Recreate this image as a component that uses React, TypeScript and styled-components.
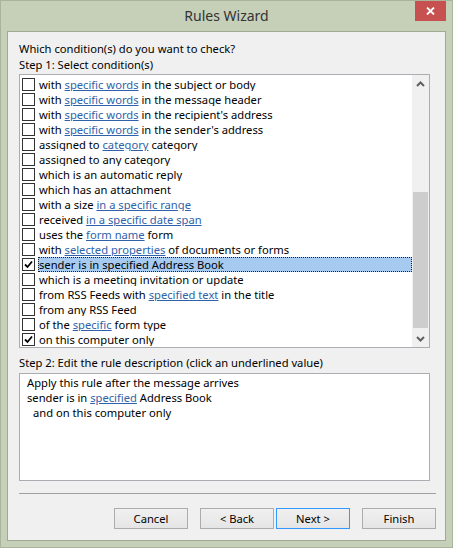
import styled, { createGlobalStyle, css } from "styled-components";

const GlobalStyle = createGlobalStyle`
  html, body {
    margin: 0;
    padding: 0;
    background: #c6d0b9;
  }
  * {
    box-sizing: border-box;
  }
`;

const uiFont = `"Segoe UI", "Noto Sans", "Open Sans", sans-serif`;

const Window = styled.div`
  width: 453px;
  height: 548px;
  background: #c6d0b9;
  border: 1px solid #a9b59b;
  display: flex;
  flex-direction: column;
  padding: 0 6px 6px 6px;
  font-family: ${uiFont};
  font-size: 11.2px;
  color: #000;
`;

const TitleBar = styled.div`
  height: 30px;
  position: relative;
  display: flex;
  align-items: center;
  justify-content: center;
`;

const Title = styled.div`
  font-size: 14px;
  color: #333;
  margin-top: -1px;
`;

const CloseButton = styled.div`
  position: absolute;
  right: 0;
  top: 0;
  width: 31px;
  height: 20px;
  background: #c75050;
  display: flex;
  align-items: center;
  justify-content: center;
`;

const Client = styled.div`
  flex: 1;
  background: #f0f0f0;
  border: 1px solid #9fa993;
  padding: 9px 9px 0 11px;
  display: flex;
  flex-direction: column;
`;

const Heading = styled.div<{ $gap?: number }>`
  line-height: 16px;
  height: 16px;
  margin-top: ${(p) => p.$gap ?? 0}px;
  white-space: nowrap;
`;

const ListBox = styled.div`
  margin-top: 1px;
  width: 411px;
  height: 274px;
  background: #fff;
  border: 1px solid #abadb3;
  display: flex;
`;

const Rows = styled.div`
  flex: 1;
  padding-top: 2px;
  overflow: hidden;
`;

const Row = styled.div`
  height: 15px;
  display: flex;
  align-items: center;
`;

const Check = styled.div`
  width: 13px;
  height: 13px;
  margin-left: 2px;
  border: 1px solid #333;
  background: #fff;
  display: flex;
  align-items: center;
  justify-content: center;
  flex-shrink: 0;
`;

const Label = styled.div<{ $selected?: boolean }>`
  flex: 1;
  margin-left: 3px;
  padding: 0 1px;
  height: 15px;
  line-height: 13px;
  white-space: nowrap;
  overflow: hidden;
  border: 1px solid transparent;
  border-left-width: 0;
  ${(p) =>
    p.$selected &&
    css`
      background: #a6caf0;
      border: 1px dotted #222;
      padding-left: 0;
    `}
`;

const Link = styled.span`
  color: #2f62a8;
  text-decoration: underline;
  text-underline-offset: 1px;
`;

const ScrollBar = styled.div`
  width: 17px;
  background: #f0f0f0;
  display: flex;
  flex-direction: column;
`;

const ScrollArrow = styled.div`
  height: 17px;
  display: flex;
  align-items: center;
  justify-content: center;
`;

const Track = styled.div`
  flex: 1;
  display: flex;
  flex-direction: column;
  align-items: center;
`;

const Thumb = styled.div`
  width: 15px;
  background: #cdcdcd;
`;

const DescBox = styled.div`
  margin-top: 2px;
  width: 411px;
  height: 108px;
  background: #fff;
  border: 1px solid #abadb3;
  padding: 1px 0 0 7px;
`;

const DescLine = styled.div<{ $indent?: number }>`
  line-height: 15px;
  padding-left: ${(p) => p.$indent ?? 0}px;
  white-space: nowrap;
`;

const Separator = styled.div`
  margin-top: 12px;
  border-top: 1px solid #a0a0a0;
`;

const ButtonRow = styled.div`
  margin-top: 14px;
  display: flex;
  justify-content: flex-end;
`;

const Button = styled.div<{ $default?: boolean; $gap: number }>`
  width: 74px;
  height: 21px;
  margin-left: ${(p) => p.$gap}px;
  border: 1px solid ${(p) => (p.$default ? "#3399ff" : "#acacac")};
  background: linear-gradient(#f0f0f0, #e5e5e5);
  display: flex;
  align-items: center;
  justify-content: center;
  padding-bottom: 1px;
`;

type Part = string | { link: string };
type Condition = { parts: Part[]; checked?: boolean; selected?: boolean };

const conditions: Condition[] = [
  { parts: ["with ", { link: "specific words" }, " in the subject or body"] },
  { parts: ["with ", { link: "specific words" }, " in the message header"] },
  { parts: ["with ", { link: "specific words" }, " in the recipient's address"] },
  { parts: ["with ", { link: "specific words" }, " in the sender's address"] },
  { parts: ["assigned to ", { link: "category" }, " category"] },
  { parts: ["assigned to any category"] },
  { parts: ["which is an automatic reply"] },
  { parts: ["which has an attachment"] },
  { parts: ["with a size ", { link: "in a specific range" }] },
  { parts: ["received ", { link: "in a specific date span" }] },
  { parts: ["uses the ", { link: "form name" }, " form"] },
  { parts: ["with ", { link: "selected properties" }, " of documents or forms"] },
  { parts: ["sender is in specified Address Book"], checked: true, selected: true },
  { parts: ["which is a meeting invitation or update"] },
  { parts: ["from RSS Feeds with ", { link: "specified text" }, " in the title"] },
  { parts: ["from any RSS Feed"] },
  { parts: ["of the ", { link: "specific" }, " form type"] },
  { parts: ["on this computer only"], checked: true },
];

const renderParts = (parts: Part[]) =>
  parts.map((p, i) =>
    typeof p === "string" ? <span key={i}>{p}</span> : <Link key={i}>{p.link}</Link>
  );

const CheckMark = () => (
  <svg width="9" height="9" viewBox="0 0 9 9">
    <path d="M1 4.5 L3.5 7 L8 1.5" fill="none" stroke="#000" strokeWidth="1.8" />
  </svg>
);

const Chevron = ({ up }: { up?: boolean }) => (
  <svg width="9" height="6" viewBox="0 0 9 6">
    <path
      d={up ? "M1 5 L4.5 1.5 L8 5" : "M1 1 L4.5 4.5 L8 1"}
      fill="none"
      stroke="#606060"
      strokeWidth="2"
    />
  </svg>
);

export default function App() {
  return (
    <>
      <GlobalStyle />
      <Window>
        <TitleBar>
          <Title>Rules Wizard</Title>
          <CloseButton>
            <svg width="9" height="8" viewBox="0 0 9 8">
              <path d="M1 0.5 L8 7.5 M8 0.5 L1 7.5" stroke="#fff" strokeWidth="1.8" />
            </svg>
          </CloseButton>
        </TitleBar>
        <Client>
          <Heading>Which condition(s) do you want to check?</Heading>
          <Heading>Step 1: Select condition(s)</Heading>
          <ListBox>
            <Rows>
              {conditions.map((c, i) => (
                <Row key={i}>
                  <Check>{c.checked && <CheckMark />}</Check>
                  <Label $selected={c.selected}>{renderParts(c.parts)}</Label>
                </Row>
              ))}
            </Rows>
            <ScrollBar>
              <ScrollArrow>
                <Chevron up />
              </ScrollArrow>
              <Track>
                <Thumb style={{ marginTop: 100, height: 136 }} />
              </Track>
              <ScrollArrow>
                <Chevron />
              </ScrollArrow>
            </ScrollBar>
          </ListBox>
          <Heading $gap={7}>Step 2: Edit the rule description (click an underlined value)</Heading>
          <DescBox>
            <DescLine>Apply this rule after the message arrives</DescLine>
            <DescLine>
              sender is in <Link>specified</Link> Address Book
            </DescLine>
            <DescLine $indent={6}>and on this computer only</DescLine>
          </DescBox>
          <Separator />
          <ButtonRow>
            <Button $gap={0}>Cancel</Button>
            <Button $gap={12}>&lt; Back</Button>
            <Button $gap={2} $default>
              Next &gt;
            </Button>
            <Button $gap={12}>Finish</Button>
          </ButtonRow>
        </Client>
      </Window>
    </>
  );
}
